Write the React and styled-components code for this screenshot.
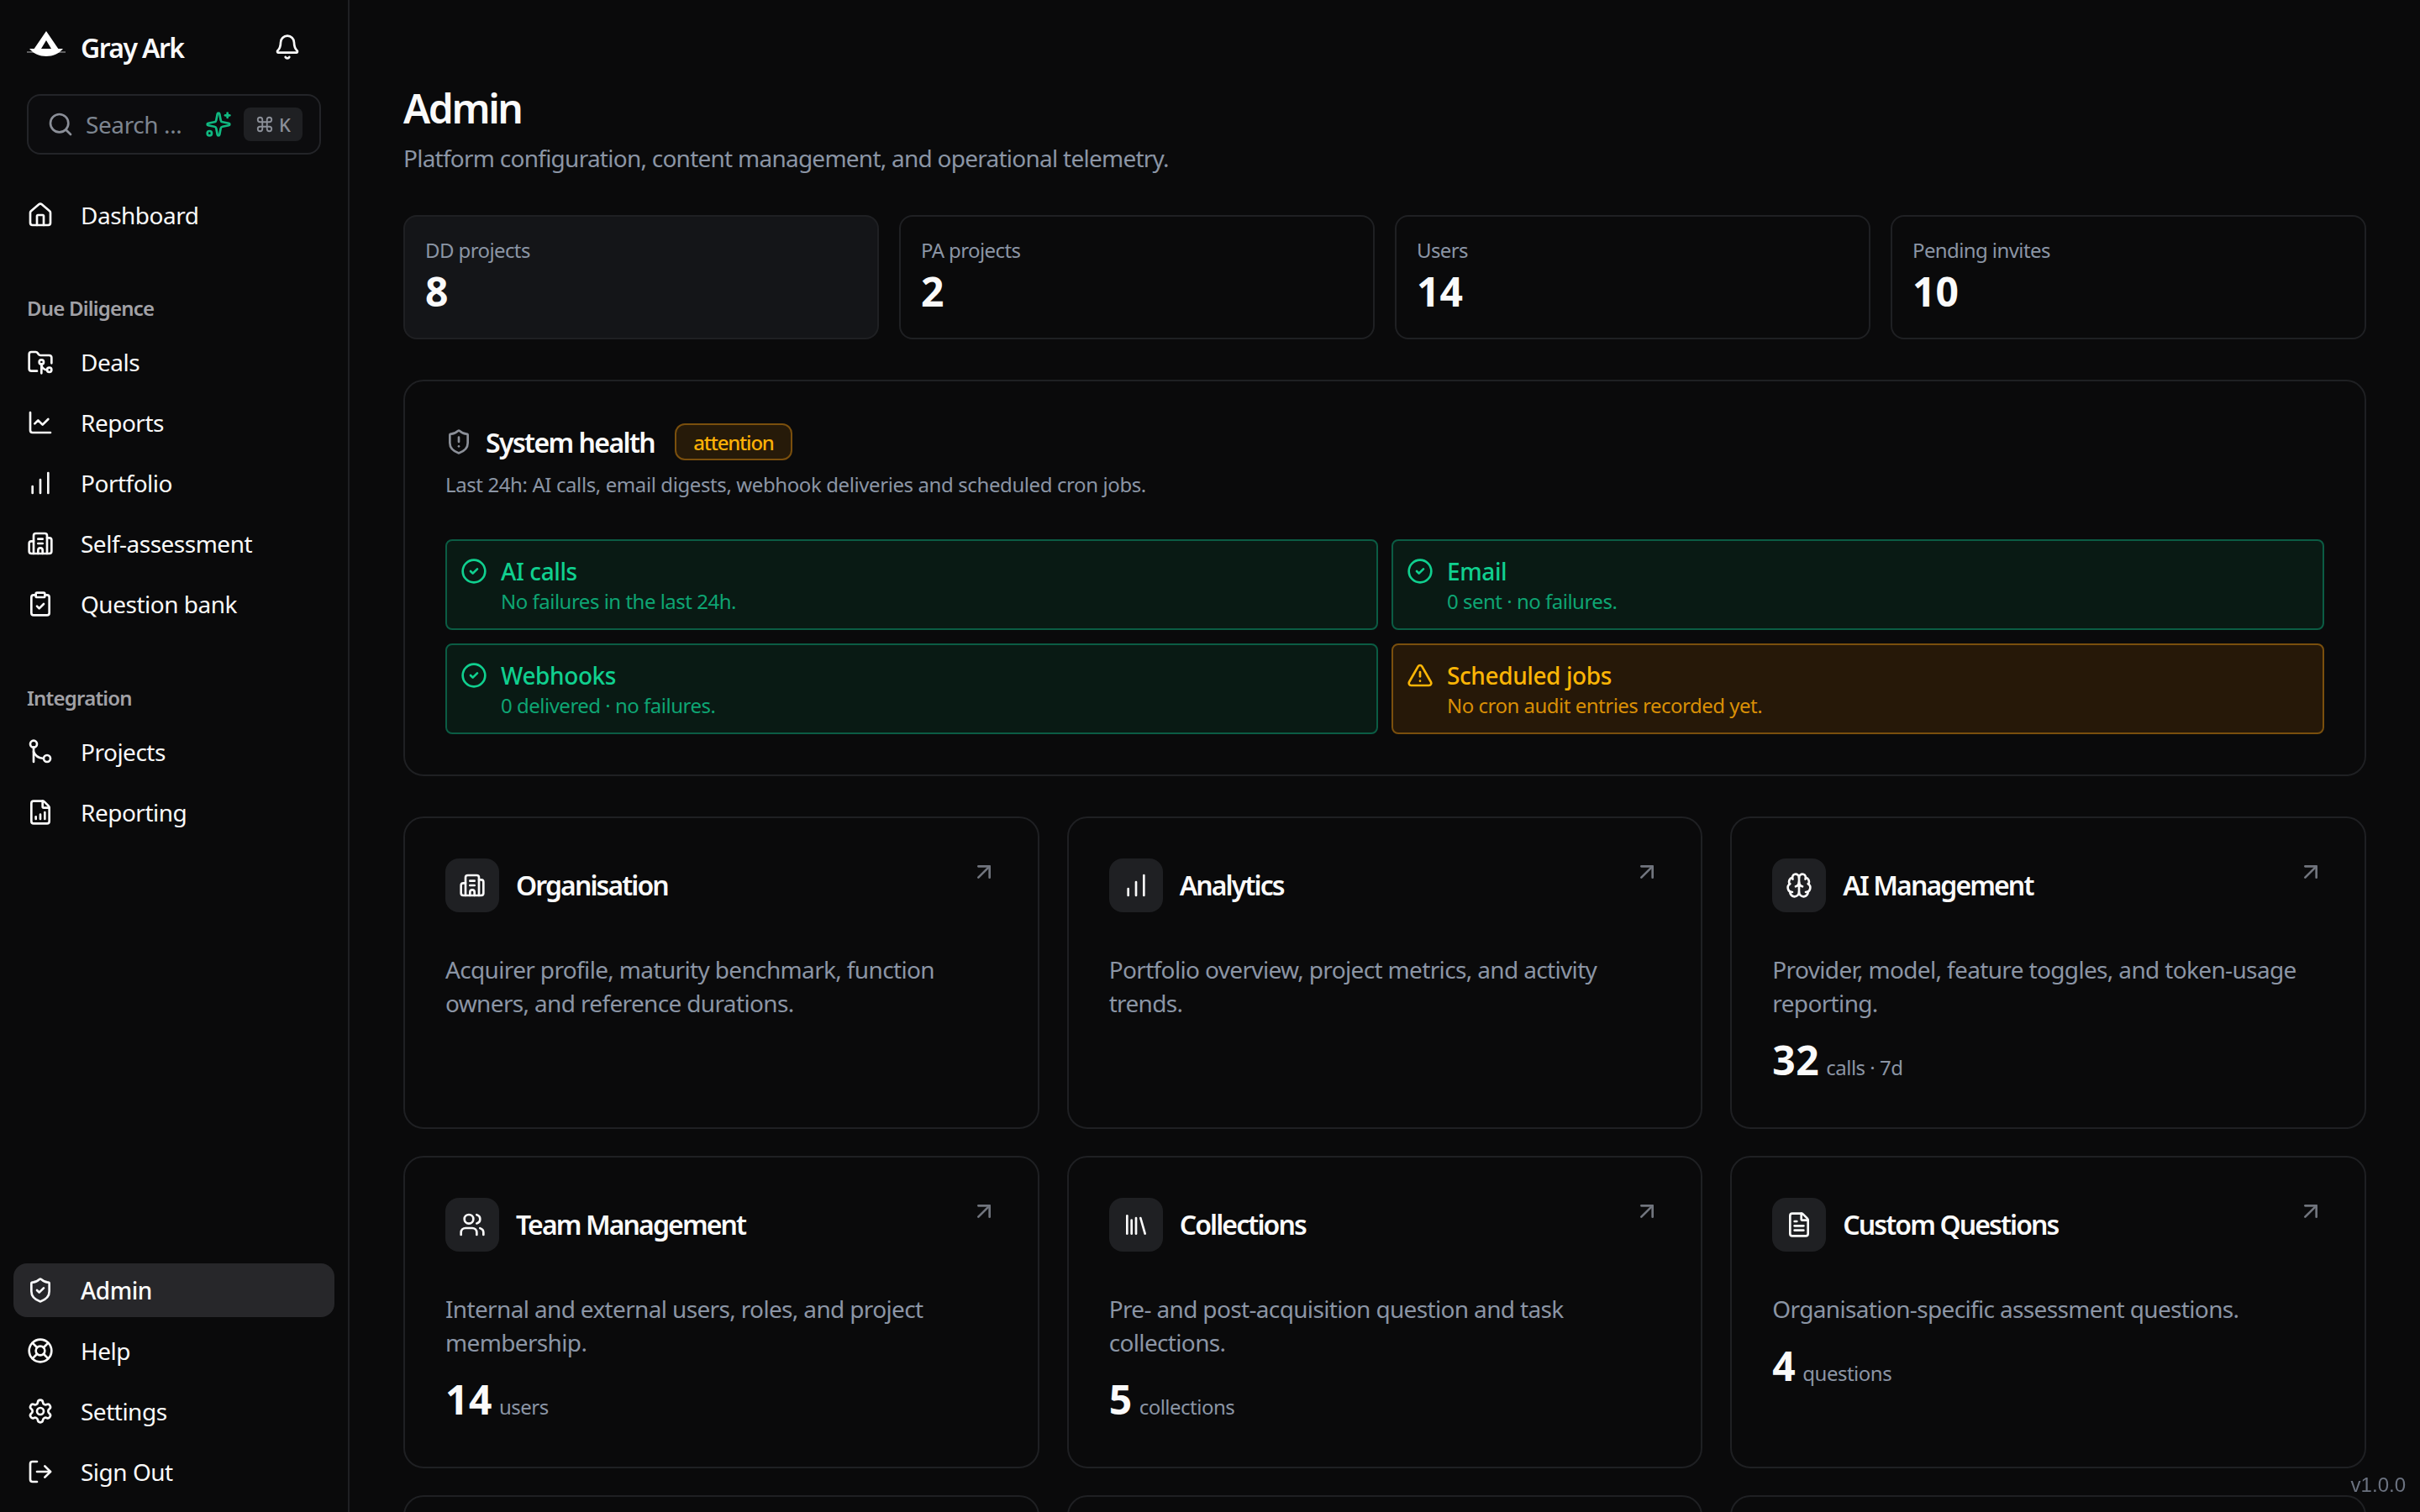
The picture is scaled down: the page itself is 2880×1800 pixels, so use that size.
import styled, { createGlobalStyle } from 'styled-components'
import {
  House, FolderGit2, ChartLine, ChartNoAxesColumnIncreasing, Building2, ClipboardCheck,
  FileChartColumnIncreasing, ShieldCheck, LifeBuoy, Settings, LogOut, Search, Sparkles,
  Bell, Command, ShieldAlert, CircleCheck, TriangleAlert, Brain, Users, Library, FileText,
  ArrowUpRight,
} from 'lucide-react'

const FONT = '"Noto Sans", "Open Sans", sans-serif'

const GlobalStyle = createGlobalStyle`
  html, body {
    margin: 0;
    height: 100%;
    background: #0a0a0b;
    color: #fafafa;
    font-family: ${FONT};
    overflow: hidden;
  }
  * { box-sizing: border-box; }
`

const Shell = styled.div`
  display: flex;
  width: 2880px;
  height: 1800px;
  overflow: hidden;
  background: #0a0a0b;
`

// sidebar
const Sidebar = styled.aside`
  flex: 0 0 416px;
  height: 100%;
  border-right: 2px solid #1f2023;
  padding: 0 16px 16px;
  display: flex;
  flex-direction: column;
`
const Brand = styled.div`
  height: 112px;
  padding: 0 16px 0 16px;
  display: flex;
  align-items: center;
  justify-content: space-between;
`
const BrandName = styled.div`
  display: flex;
  align-items: center;
  gap: 18px;
  font-size: 32px;
  font-weight: 600;
  letter-spacing: -1.6px;
`
const LogoMark = styled.svg`
  margin-bottom: 7px;
`
const BellButton = styled.span`
  display: flex;
  margin-right: 24px;
`
const SearchBox = styled.div`
  margin: 0 16px;
  height: 72px;
  border: 2px solid #232428;
  border-radius: 16px;
  background: #0c0c0e;
  display: flex;
  align-items: center;
  padding: 0 20px 0 22px;
  color: #8b8f98;
`
const SearchText = styled.span`
  margin-left: 14px;
  flex: 1;
  font-size: 28px;
  color: #7d8590;
  letter-spacing: -0.4px;
`
const Kbd = styled.span`
  margin-left: 14px;
  width: 70px;
  height: 40px;
  border-radius: 8px;
  background: #1f2023;
  color: #8b8f98;
  font-size: 22px;
  font-weight: 500;
  display: flex;
  align-items: center;
  justify-content: center;
  gap: 6px;
`
const NavList = styled.nav`
  display: flex;
  flex-direction: column;
  gap: 8px;
  margin-top: ${p => p.$top || 0}px;
`
const NavItem = styled.div`
  height: 64px;
  padding: 0 16px;
  display: flex;
  align-items: center;
  gap: 32px;
  border-radius: 16px;
  font-size: 28px;
  font-weight: ${p => (p.$active ? 500 : 400)};
  color: #fafafa;
  background: ${p => (p.$active ? '#27272a' : 'transparent')};
  letter-spacing: -0.5px;
`
const SectionLabel = styled.div`
  margin: ${p => p.$top}px 0 16px;
  padding: 0 16px;
  height: 32px;
  line-height: 32px;
  font-size: 24px;
  font-weight: 600;
  color: #a1a1a6;
  letter-spacing: -0.8px;
`
const Spacer = styled.div`
  flex: 1;
`

// main column
const Main = styled.main`
  flex: 1;
  padding: 97px 64px 0;
  min-width: 0;
`
const PageTitle = styled.h1`
  margin: 0;
  font-size: 48px;
  line-height: 64px;
  font-weight: 600;
  letter-spacing: -2.4px;
`
const PageSub = styled.p`
  margin: 7px 0 0;
  font-size: 28px;
  line-height: 40px;
  color: #8b95a5;
  letter-spacing: -0.75px;
`
const Stats = styled.div`
  margin-top: 48px;
  display: grid;
  grid-template-columns: repeat(4, 1fr);
  gap: 24px;
`
const Stat = styled.div`
  height: 148px;
  padding: 24px;
  border: 2px solid #1f2023;
  border-radius: 16px;
  background: ${p => (p.$hover ? '#141518' : 'transparent')};
`
const StatLabel = styled.div`
  font-size: 24px;
  line-height: 32px;
  color: #8b95a5;
  letter-spacing: -0.6px;
`
const StatValue = styled.div`
  margin-top: 5px;
  font-size: 48px;
  line-height: 56px;
  font-weight: 700;
`
const Health = styled.section`
  margin-top: 48px;
  height: 472px;
  padding: 48px;
  border: 2px solid #1f2023;
  border-radius: 24px;
`
const HealthHead = styled.div`
  display: flex;
  align-items: center;
  height: 48px;
`
const HealthTitle = styled.h2`
  margin: 0 24px 0 16px;
  font-size: 32px;
  font-weight: 600;
  letter-spacing: -1.6px;
`
const Badge = styled.span`
  height: 44px;
  padding: 0 20px;
  display: flex;
  align-items: center;
  border: 2px solid #7a4f0d;
  border-radius: 12px;
  background: #261a09;
  color: #fbb006;
  font-size: 24px;
  font-weight: 500;
  letter-spacing: -1.2px;
`
const HealthSub = styled.p`
  margin: 11px 0 0;
  font-size: 24px;
  line-height: 32px;
  color: #8b95a5;
  letter-spacing: -0.4px;
`
const Alerts = styled.div`
  margin-top: 49px;
  display: grid;
  grid-template-columns: 1fr 1fr;
  gap: 16px;
`
const Alert = styled.div`
  height: 108px;
  padding: 16px 16px;
  display: flex;
  gap: 16px;
  border-radius: 8px;
  border: 2px solid ${p => (p.$warn ? '#7a4f0d' : '#0b5c44')};
  background: ${p => (p.$warn ? '#261808' : '#091a14')};
  color: ${p => (p.$warn ? '#fbb506' : '#10d08f')};
`
const AlertBody = styled.div`
  min-width: 0;
`
const AlertTitle = styled.div`
  font-size: 28px;
  line-height: 40px;
  font-weight: 500;
  letter-spacing: -0.4px;
`
const AlertText = styled.div`
  font-size: 24px;
  line-height: 32px;
  color: ${p => (p.$warn ? '#d98f06' : '#0ea573')};
  letter-spacing: -0.5px;
`
const Cards = styled.div`
  margin-top: 48px;
  display: grid;
  grid-template-columns: repeat(3, 1fr);
  gap: 32px 33px;
`
const Card = styled.article`
  height: 372px;
  padding: 48px;
  border: 2px solid #1f2023;
  border-radius: 24px;
`
const CardHead = styled.div`
  display: flex;
  align-items: flex-start;
`
const IconBox = styled.span`
  flex: 0 0 64px;
  height: 64px;
  border-radius: 16px;
  background: #1f2023;
  display: flex;
  align-items: center;
  justify-content: center;
`
const CardTitle = styled.h3`
  flex: 1;
  margin: 0 0 0 20px;
  font-size: 32px;
  line-height: 64px;
  font-weight: 600;
  letter-spacing: -1.9px;
`
const CardArrow = styled.span`
  display: flex;
  color: #71757e;
`
const CardText = styled.p`
  margin: 48px 0 0;
  font-size: 28px;
  line-height: 40px;
  color: #8b95a5;
  letter-spacing: -0.65px;
`
const Metric = styled.div`
  margin-top: 20px;
  display: flex;
  align-items: baseline;
  gap: 8px;
`
const MetricValue = styled.span`
  font-size: 48px;
  line-height: 56px;
  font-weight: 700;
  letter-spacing: 0.5px;
`
const MetricLabel = styled.span`
  font-size: 24px;
  color: #8b95a5;
  letter-spacing: -0.5px;
`
const Version = styled.div`
  position: fixed;
  right: 17px;
  bottom: 18px;
  font-family: "Liberation Sans", Arial, sans-serif;
  font-size: 24px;
  color: #6b7280;
`
const AlertIcon = styled.span`
  display: flex;
  margin-top: 4px;
`

const Logo = () => (
  <LogoMark width="46" height="31" viewBox="0 0 46 31" fill="none">
    <path d="M0 25 H46" stroke="#5e5e60" strokeWidth="2" />
    <path d="M23 0 L38 22 H8 Z M23 11 L17 21 H29 Z" fill="#fff" fillRule="evenodd" />
    <path d="M3 21 H43 C38 27 31 30 23 30 C15 30 8 27 3 21 Z" fill="#fff" />
  </LogoMark>
)

const ProjectsIcon = props => (
  <svg width="32" height="32" viewBox="0 0 24 24" fill="none" stroke="currentColor" strokeWidth="2" strokeLinecap="round" strokeLinejoin="round" {...props}>
    <circle cx="6" cy="5" r="3" />
    <path d="M6 8v13" />
    <path d="M6 12c1.5 3.5 4 5.5 8 5.8" />
    <circle cx="18" cy="18" r="3" />
  </svg>
)

const mainNav = [
  { icon: FolderGit2, label: 'Deals' },
  { icon: ChartLine, label: 'Reports' },
  { icon: ChartNoAxesColumnIncreasing, label: 'Portfolio' },
  { icon: Building2, label: 'Self-assessment' },
  { icon: ClipboardCheck, label: 'Question bank' },
]
const integrationNav = [
  { icon: ProjectsIcon, label: 'Projects' },
  { icon: FileChartColumnIncreasing, label: 'Reporting' },
]
const bottomNav = [
  { icon: ShieldCheck, label: 'Admin', active: true },
  { icon: LifeBuoy, label: 'Help' },
  { icon: Settings, label: 'Settings' },
  { icon: LogOut, label: 'Sign Out' },
]
const stats = [
  { label: 'DD projects', value: 8, hover: true },
  { label: 'PA projects', value: 2 },
  { label: 'Users', value: 14 },
  { label: 'Pending invites', value: 10 },
]
const alerts = [
  { title: 'AI calls', text: 'No failures in the last 24h.' },
  { title: 'Email', text: '0 sent · no failures.' },
  { title: 'Webhooks', text: '0 delivered · no failures.' },
  { title: 'Scheduled jobs', text: 'No cron audit entries recorded yet.', warn: true },
]
const cards = [
  { icon: Building2, title: 'Organisation', text: 'Acquirer profile, maturity benchmark, function owners, and reference durations.' },
  { icon: ChartNoAxesColumnIncreasing, title: 'Analytics', text: 'Portfolio overview, project metrics, and activity trends.' },
  { icon: Brain, title: 'AI Management', text: 'Provider, model, feature toggles, and token-usage reporting.', value: 32, unit: 'calls · 7d' },
  { icon: Users, title: 'Team Management', text: 'Internal and external users, roles, and project membership.', value: 14, unit: 'users' },
  { icon: Library, title: 'Collections', text: 'Pre- and post-acquisition question and task collections.', value: 5, unit: 'collections' },
  { icon: FileText, title: 'Custom Questions', text: 'Organisation-specific assessment questions.', value: 4, unit: 'questions' },
]

function NavGroup({ items, top }) {
  return (
    <NavList $top={top}>
      {items.map(({ icon: Icon, label, active }) => (
        <NavItem key={label} $active={active}>
          <Icon size={32} strokeWidth={2} />
          {label}
        </NavItem>
      ))}
    </NavList>
  )
}

export default function App() {
  return (
    <>
      <GlobalStyle />
      <Shell>
        <Sidebar>
          <Brand>
            <BrandName><Logo />Gray Ark</BrandName>
            <BellButton><Bell size={32} strokeWidth={2} /></BellButton>
          </Brand>
          <SearchBox>
            <Search size={32} strokeWidth={2} />
            <SearchText>Search ...</SearchText>
            <Sparkles size={32} strokeWidth={2} color="#10b981" />
            <Kbd><Command size={22} strokeWidth={2} />K</Kbd>
          </SearchBox>
          <NavGroup items={[{ icon: House, label: 'Dashboard' }]} top={40} />
          <SectionLabel $top={63}>Due Diligence</SectionLabel>
          <NavGroup items={mainNav} />
          <SectionLabel $top={64}>Integration</SectionLabel>
          <NavGroup items={integrationNav} />
          <Spacer />
          <NavGroup items={bottomNav} />
        </Sidebar>
        <Main>
          <PageTitle>Admin</PageTitle>
          <PageSub>Platform configuration, content management, and operational telemetry.</PageSub>
          <Stats>
            {stats.map(s => (
              <Stat key={s.label} $hover={s.hover}>
                <StatLabel>{s.label}</StatLabel>
                <StatValue>{s.value}</StatValue>
              </Stat>
            ))}
          </Stats>
          <Health>
            <HealthHead>
              <ShieldAlert size={32} strokeWidth={2} color="#8b8f98" />
              <HealthTitle>System health</HealthTitle>
              <Badge>attention</Badge>
            </HealthHead>
            <HealthSub>Last 24h: AI calls, email digests, webhook deliveries and scheduled cron jobs.</HealthSub>
            <Alerts>
              {alerts.map(a => {
                const Icon = a.warn ? TriangleAlert : CircleCheck
                return (
                  <Alert key={a.title} $warn={a.warn}>
                    <AlertIcon><Icon size={32} strokeWidth={2} /></AlertIcon>
                    <AlertBody>
                      <AlertTitle>{a.title}</AlertTitle>
                      <AlertText $warn={a.warn}>{a.text}</AlertText>
                    </AlertBody>
                  </Alert>
                )
              })}
            </Alerts>
          </Health>
          <Cards>
            {cards.map(({ icon: Icon, title, text, value, unit }) => (
              <Card key={title}>
                <CardHead>
                  <IconBox><Icon size={32} strokeWidth={2} /></IconBox>
                  <CardTitle>{title}</CardTitle>
                  <CardArrow><ArrowUpRight size={32} strokeWidth={2} /></CardArrow>
                </CardHead>
                <CardText>{text}</CardText>
                {value !== undefined && (
                  <Metric>
                    <MetricValue>{value}</MetricValue>
                    <MetricLabel>{unit}</MetricLabel>
                  </Metric>
                )}
              </Card>
            ))}
            <Card />
            <Card />
            <Card />
          </Cards>
        </Main>
      </Shell>
      <Version>v1.0.0</Version>
    </>
  )
}
